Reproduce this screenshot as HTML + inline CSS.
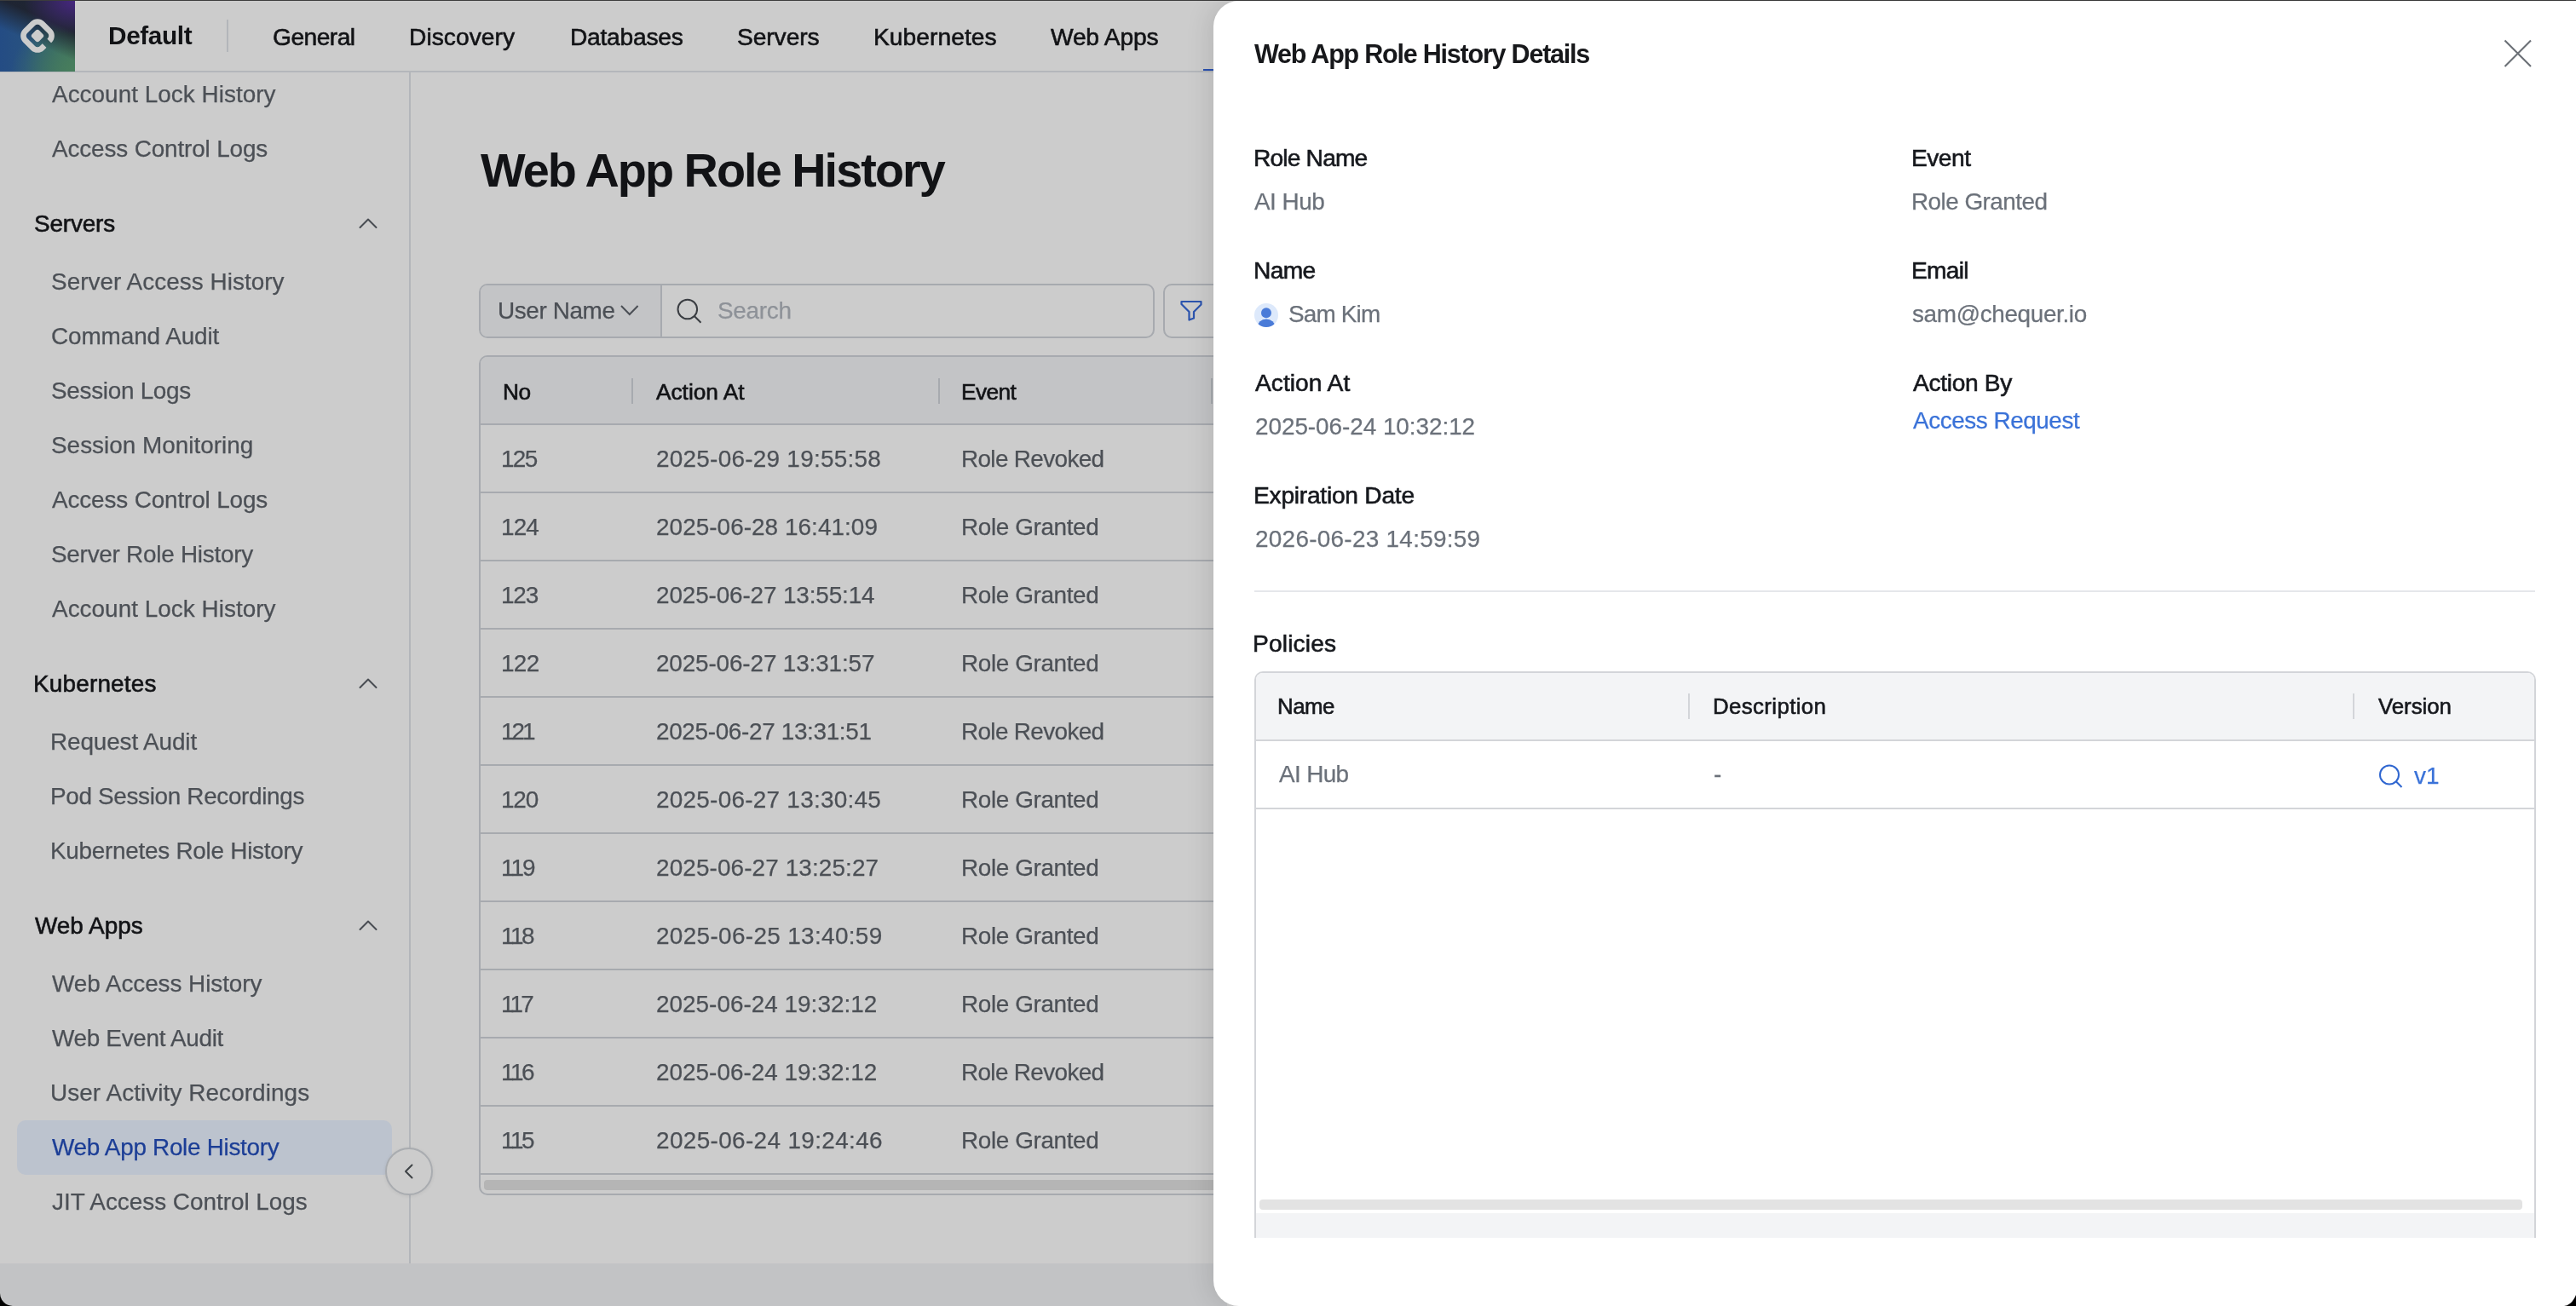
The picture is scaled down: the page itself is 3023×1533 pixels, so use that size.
<!DOCTYPE html>
<html><head><meta charset="utf-8">
<style>
html,body{margin:0;padding:0;}
body{width:3023px;height:1533px;overflow:hidden;position:relative;background:#cccccc;font-family:"Liberation Sans",sans-serif;}
.t{position:absolute;white-space:pre;line-height:1;will-change:transform;}
.a{position:absolute;box-sizing:border-box;}
</style></head><body>
<!-- top dark line -->
<div class="a" style="left:0;top:0;width:3023px;height:1px;background:#3c3c3c;z-index:5"></div>
<!-- logo box -->
<div class="a" style="left:0;top:1px;width:88px;height:83px;overflow:hidden;
 background:
  radial-gradient(ellipse 60px 40px at 100% 0%, rgba(70,38,128,1) 0%, rgba(70,38,128,0.6) 40%, rgba(70,38,128,0) 100%),
  linear-gradient(204deg, rgba(30,34,46,0.9) 0%, rgba(30,34,46,0.95) 30%, rgba(30,34,46,0) 58%),
  radial-gradient(ellipse 75px 60px at 100% 100%, rgba(72,126,92,1) 0%, rgba(72,126,92,0) 100%),
  linear-gradient(90deg,#244c84 0%,#285280 35%,#30606e 65%,#40755f 100%);">
 <svg width="88" height="83" viewBox="0 0 88 83" style="position:absolute;left:0;top:0">
  <defs><mask id="lm"><rect x="0" y="0" width="88" height="83" fill="#fff"/>
   <g transform="translate(44 41) rotate(45)"><rect x="10" y="-5.5" width="12" height="8" fill="#000"/></g></mask></defs>
  <g mask="url(#lm)"><g transform="translate(44 41) rotate(45)">
   <rect x="-13.9" y="-13.9" width="27.8" height="27.8" rx="7.5" fill="none" stroke="#cccccc" stroke-width="6.6"/>
  </g></g>
  <g transform="translate(44 41) rotate(45)"><rect x="-5.9" y="-5.9" width="11.8" height="11.8" rx="3" fill="#cccccc"/></g>
 </svg>
</div>
<!-- header bottom border -->
<div class="a" style="left:88px;top:83px;width:1340px;height:2px;background:#b4b7bb"></div>
<div class="a" style="left:0;top:84px;width:88px;height:1px;background:#b4b7bb"></div>
<!-- active tab indicator -->
<div class="a" style="left:1412px;top:81px;width:20px;height:2px;background:#2a50b0"></div>
<!-- header divider -->
<div class="a" style="left:266px;top:23px;width:2px;height:38px;background:#b3b6ba"></div>
<!-- sidebar border -->
<div class="a" style="left:480px;top:84px;width:2px;height:1399px;background:#b3b6ba"></div>
<!-- selected item -->
<div class="a" style="left:20px;top:1315px;width:440px;height:64px;border-radius:10px;background:#bcc3ce"></div>
<!-- section chevrons -->
<svg class="a" style="left:418px;top:250px" width="28" height="24" viewBox="0 0 28 24"><path d="M4.5 17 L14 7.5 L23.5 17" fill="none" stroke="#484c52" stroke-width="2" stroke-linecap="round" stroke-linejoin="round"/></svg>
<svg class="a" style="left:418px;top:790px" width="28" height="24" viewBox="0 0 28 24"><path d="M4.5 17 L14 7.5 L23.5 17" fill="none" stroke="#484c52" stroke-width="2" stroke-linecap="round" stroke-linejoin="round"/></svg>
<svg class="a" style="left:418px;top:1074px" width="28" height="24" viewBox="0 0 28 24"><path d="M4.5 17 L14 7.5 L23.5 17" fill="none" stroke="#484c52" stroke-width="2" stroke-linecap="round" stroke-linejoin="round"/></svg>
<!-- collapse button -->
<div class="a" style="left:452px;top:1347px;width:56px;height:56px;border-radius:50%;border:2px solid #a9acb0;background:#cccccc;box-shadow:0 1px 4px rgba(0,0,0,0.08)"></div>
<svg class="a" style="left:466px;top:1361px" width="28" height="28" viewBox="0 0 28 28"><path d="M17.5 6.5 L10 14 L17.5 21.5" fill="none" stroke="#3f4347" stroke-width="2" stroke-linecap="round" stroke-linejoin="round"/></svg>
<!-- bottom strip -->
<div class="a" style="left:0;top:1483px;width:1440px;height:50px;background:#c2c3c5"></div>
<!-- bottom-left black corner -->
<svg class="a" style="left:0;top:1518px;z-index:20" width="15" height="15" viewBox="0 0 15 15"><path d="M0 0 A15 15 0 0 0 15 15 L0 15 Z" fill="#000"/></svg>

<!-- search group -->
<div class="a" style="left:562px;top:333px;width:793px;height:64px;border:2px solid #a7aaaf;border-radius:10px;overflow:hidden">
  <div class="a" style="left:0;top:0;width:213px;height:60px;background:#c3c4c6;border-right:2px solid #a7aaaf"></div>
</div>
<svg class="a" style="left:722px;top:350px" width="32" height="28" viewBox="0 0 32 28"><path d="M7 9 L16.8 19 L26.6 9" fill="none" stroke="#4b4f55" stroke-width="2"/></svg>
<svg class="a" style="left:790px;top:347px" width="36" height="36" viewBox="0 0 36 36"><circle cx="16.8" cy="16" r="11.3" fill="none" stroke="#3a3d42" stroke-width="2"/><path d="M24.8 24 L32.5 31.7" stroke="#3a3d42" stroke-width="2"/></svg>
<!-- filter button -->
<div class="a" style="left:1365px;top:333px;width:120px;height:64px;border:2px solid #a7aaaf;border-radius:10px"></div>
<svg class="a" style="left:1382px;top:349px" width="32" height="32" viewBox="0 0 32 32"><path d="M4.5 5 L27.5 5 L27.5 8.5 L19 17 L19 24.5 L13.5 26.5 L13.5 17 L4.5 8 Z" fill="none" stroke="#2c54ae" stroke-width="2.2" stroke-linejoin="round"/></svg>

<!-- main table -->
<div class="a" style="left:562px;top:417px;width:900px;height:986px;border:2px solid #a7aaaf;border-radius:10px;overflow:hidden;background:#cccccc">
  <div class="a" style="left:0;top:0;width:900px;height:79px;background:#c3c4c6"></div>
</div>
<!-- row borders -->
<div id="rowlines"></div>
<div class="a" style="left:564px;top:497px;width:870px;height:2px;background:#a7aaaf"></div>
<div class="a" style="left:564px;top:577px;width:870px;height:2px;background:#a7aaaf"></div>
<div class="a" style="left:564px;top:657px;width:870px;height:2px;background:#a7aaaf"></div>
<div class="a" style="left:564px;top:737px;width:870px;height:2px;background:#a7aaaf"></div>
<div class="a" style="left:564px;top:817px;width:870px;height:2px;background:#a7aaaf"></div>
<div class="a" style="left:564px;top:897px;width:870px;height:2px;background:#a7aaaf"></div>
<div class="a" style="left:564px;top:977px;width:870px;height:2px;background:#a7aaaf"></div>
<div class="a" style="left:564px;top:1057px;width:870px;height:2px;background:#a7aaaf"></div>
<div class="a" style="left:564px;top:1137px;width:870px;height:2px;background:#a7aaaf"></div>
<div class="a" style="left:564px;top:1217px;width:870px;height:2px;background:#a7aaaf"></div>
<div class="a" style="left:564px;top:1297px;width:870px;height:2px;background:#a7aaaf"></div>
<div class="a" style="left:564px;top:1377px;width:870px;height:2px;background:#a7aaaf"></div>
<!-- header dividers -->
<div class="a" style="left:741px;top:444px;width:2px;height:30px;background:#a7aaaf"></div>
<div class="a" style="left:1101px;top:444px;width:2px;height:30px;background:#a7aaaf"></div>
<div class="a" style="left:1421px;top:444px;width:2px;height:30px;background:#a7aaaf"></div>
<!-- main scrollbar -->
<div class="a" style="left:568px;top:1385px;width:880px;height:12px;border-radius:4px;background:#b5b5b5"></div>

<div class=t id=t0 style="left:127.0px;top:27.38px;font-size:29.80px;font-weight:bold;color:#121316;letter-spacing:-0.383px;">Default</div>
<div class=t id=t1 style="left:319.6px;top:28.73px;font-size:28.20px;font-weight:normal;color:#121316;letter-spacing:-0.533px;-webkit-text-stroke:0.6px currentColor;">General</div>
<div class=t id=t2 style="left:480.0px;top:28.73px;font-size:28.20px;font-weight:normal;color:#121316;letter-spacing:0.037px;-webkit-text-stroke:0.6px currentColor;">Discovery</div>
<div class=t id=t3 style="left:668.6px;top:28.73px;font-size:28.20px;font-weight:normal;color:#121316;letter-spacing:-0.250px;-webkit-text-stroke:0.6px currentColor;">Databases</div>
<div class=t id=t4 style="left:864.8px;top:28.73px;font-size:28.20px;font-weight:normal;color:#121316;letter-spacing:-0.083px;-webkit-text-stroke:0.6px currentColor;">Servers</div>
<div class=t id=t5 style="left:1024.8px;top:28.73px;font-size:28.20px;font-weight:normal;color:#121316;letter-spacing:0.044px;-webkit-text-stroke:0.6px currentColor;">Kubernetes</div>
<div class=t id=t6 style="left:1233.0px;top:28.73px;font-size:28.20px;font-weight:normal;color:#121316;letter-spacing:-0.214px;-webkit-text-stroke:0.6px currentColor;">Web Apps</div>
<div class=t id=t7 style="left:61.2px;top:97.18px;font-size:27.91px;font-weight:normal;color:#4c5056;letter-spacing:0.021px;-webkit-text-stroke:0.25px currentColor;">Account Lock History</div>
<div class=t id=t8 style="left:61.2px;top:161.18px;font-size:27.91px;font-weight:normal;color:#4c5056;letter-spacing:-0.150px;-webkit-text-stroke:0.25px currentColor;">Access Control Logs</div>
<div class=t id=t9 style="left:40.0px;top:248.98px;font-size:27.91px;font-weight:normal;color:#121316;letter-spacing:-0.167px;-webkit-text-stroke:0.6px currentColor;">Servers</div>
<div class=t id=t10 style="left:60.2px;top:316.98px;font-size:27.91px;font-weight:normal;color:#4c5056;letter-spacing:0.030px;-webkit-text-stroke:0.25px currentColor;">Server Access History</div>
<div class=t id=t11 style="left:60.2px;top:380.98px;font-size:27.91px;font-weight:normal;color:#4c5056;letter-spacing:-0.100px;-webkit-text-stroke:0.25px currentColor;">Command Audit</div>
<div class=t id=t12 style="left:60.2px;top:444.98px;font-size:27.91px;font-weight:normal;color:#4c5056;letter-spacing:-0.300px;-webkit-text-stroke:0.25px currentColor;">Session Logs</div>
<div class=t id=t13 style="left:60.2px;top:508.98px;font-size:27.91px;font-weight:normal;color:#4c5056;letter-spacing:0.000px;-webkit-text-stroke:0.25px currentColor;">Session Monitoring</div>
<div class=t id=t14 style="left:61.2px;top:572.98px;font-size:27.91px;font-weight:normal;color:#4c5056;letter-spacing:-0.150px;-webkit-text-stroke:0.25px currentColor;">Access Control Logs</div>
<div class=t id=t15 style="left:60.2px;top:636.98px;font-size:27.91px;font-weight:normal;color:#4c5056;letter-spacing:-0.267px;-webkit-text-stroke:0.25px currentColor;">Server Role History</div>
<div class=t id=t16 style="left:61.2px;top:700.98px;font-size:27.91px;font-weight:normal;color:#4c5056;letter-spacing:0.021px;-webkit-text-stroke:0.25px currentColor;">Account Lock History</div>
<div class=t id=t17 style="left:39.0px;top:788.98px;font-size:27.91px;font-weight:normal;color:#121316;letter-spacing:0.189px;-webkit-text-stroke:0.6px currentColor;">Kubernetes</div>
<div class=t id=t18 style="left:59.2px;top:856.98px;font-size:27.91px;font-weight:normal;color:#4c5056;letter-spacing:-0.133px;-webkit-text-stroke:0.25px currentColor;">Request Audit</div>
<div class=t id=t19 style="left:59.2px;top:920.98px;font-size:27.91px;font-weight:normal;color:#4c5056;letter-spacing:-0.343px;-webkit-text-stroke:0.25px currentColor;">Pod Session Recordings</div>
<div class=t id=t20 style="left:59.2px;top:984.98px;font-size:27.91px;font-weight:normal;color:#4c5056;letter-spacing:-0.273px;-webkit-text-stroke:0.25px currentColor;">Kubernetes Role History</div>
<div class=t id=t21 style="left:41.0px;top:1072.98px;font-size:27.91px;font-weight:normal;color:#121316;letter-spacing:0.000px;-webkit-text-stroke:0.6px currentColor;">Web Apps</div>
<div class=t id=t22 style="left:61.2px;top:1140.98px;font-size:27.91px;font-weight:normal;color:#4c5056;letter-spacing:-0.065px;-webkit-text-stroke:0.25px currentColor;">Web Access History</div>
<div class=t id=t23 style="left:61.2px;top:1204.98px;font-size:27.91px;font-weight:normal;color:#4c5056;letter-spacing:-0.321px;-webkit-text-stroke:0.25px currentColor;">Web Event Audit</div>
<div class=t id=t24 style="left:59.2px;top:1268.98px;font-size:27.91px;font-weight:normal;color:#4c5056;letter-spacing:0.074px;-webkit-text-stroke:0.25px currentColor;">User Activity Recordings</div>
<div class=t id=t25 style="left:61.2px;top:1332.98px;font-size:27.91px;font-weight:normal;color:#1c3e96;letter-spacing:-0.305px;-webkit-text-stroke:0.25px currentColor;">Web App Role History</div>
<div class=t id=t26 style="left:61.2px;top:1396.98px;font-size:27.91px;font-weight:normal;color:#4c5056;letter-spacing:-0.032px;-webkit-text-stroke:0.25px currentColor;">JIT Access Control Logs</div>
<div class=t id=t27 style="left:563.6px;top:172.05px;font-size:55.81px;font-weight:bold;color:#121316;letter-spacing:-1.947px;">Web App Role History</div>
<div class=t id=t28 style="left:583.8px;top:350.98px;font-size:27.91px;font-weight:normal;color:#4b4f55;letter-spacing:-0.400px;-webkit-text-stroke:0.25px currentColor;">User Name</div>
<div class=t id=t29 style="left:842.0px;top:350.98px;font-size:27.91px;font-weight:normal;color:#8e9298;letter-spacing:-0.280px;-webkit-text-stroke:0.25px currentColor;">Search</div>
<div class=t id=t30 style="left:589.8px;top:446.63px;font-size:26.31px;font-weight:normal;color:#121316;letter-spacing:-0.400px;-webkit-text-stroke:0.6px currentColor;">No</div>
<div class=t id=t31 style="left:770.4px;top:446.63px;font-size:26.31px;font-weight:normal;color:#121316;letter-spacing:-0.037px;-webkit-text-stroke:0.6px currentColor;">Action At</div>
<div class=t id=t32 style="left:1128.0px;top:446.63px;font-size:26.31px;font-weight:normal;color:#121316;letter-spacing:-0.600px;-webkit-text-stroke:0.6px currentColor;">Event</div>
<div class=t id=t33 style="left:588.2px;top:525.28px;font-size:27.91px;font-weight:normal;color:#4c5056;letter-spacing:-1.700px;-webkit-text-stroke:0.25px currentColor;">125</div>
<div class=t id=t34 style="left:770.4px;top:525.28px;font-size:27.91px;font-weight:normal;color:#4c5056;letter-spacing:0.261px;-webkit-text-stroke:0.25px currentColor;">2025-06-29 19:55:58</div>
<div class=t id=t35 style="left:1128.2px;top:525.28px;font-size:27.91px;font-weight:normal;color:#4c5056;letter-spacing:-0.655px;-webkit-text-stroke:0.25px currentColor;">Role Revoked</div>
<div class=t id=t36 style="left:588.2px;top:605.28px;font-size:27.91px;font-weight:normal;color:#4c5056;letter-spacing:-0.850px;-webkit-text-stroke:0.25px currentColor;">124</div>
<div class=t id=t37 style="left:770.4px;top:605.28px;font-size:27.91px;font-weight:normal;color:#4c5056;letter-spacing:0.044px;-webkit-text-stroke:0.25px currentColor;">2025-06-28 16:41:09</div>
<div class=t id=t38 style="left:1128.2px;top:605.28px;font-size:27.91px;font-weight:normal;color:#4c5056;letter-spacing:-0.382px;-webkit-text-stroke:0.25px currentColor;">Role Granted</div>
<div class=t id=t39 style="left:588.2px;top:685.28px;font-size:27.91px;font-weight:normal;color:#4c5056;letter-spacing:-1.200px;-webkit-text-stroke:0.25px currentColor;">123</div>
<div class=t id=t40 style="left:770.4px;top:685.28px;font-size:27.91px;font-weight:normal;color:#4c5056;letter-spacing:-0.144px;-webkit-text-stroke:0.25px currentColor;">2025-06-27 13:55:14</div>
<div class=t id=t41 style="left:1128.2px;top:685.28px;font-size:27.91px;font-weight:normal;color:#4c5056;letter-spacing:-0.382px;-webkit-text-stroke:0.25px currentColor;">Role Granted</div>
<div class=t id=t42 style="left:588.2px;top:765.28px;font-size:27.91px;font-weight:normal;color:#4c5056;letter-spacing:-0.700px;-webkit-text-stroke:0.25px currentColor;">122</div>
<div class=t id=t43 style="left:770.4px;top:765.28px;font-size:27.91px;font-weight:normal;color:#4c5056;letter-spacing:-0.150px;-webkit-text-stroke:0.25px currentColor;">2025-06-27 13:31:57</div>
<div class=t id=t44 style="left:1128.2px;top:765.28px;font-size:27.91px;font-weight:normal;color:#4c5056;letter-spacing:-0.382px;-webkit-text-stroke:0.25px currentColor;">Role Granted</div>
<div class=t id=t45 style="left:588.2px;top:845.28px;font-size:27.91px;font-weight:normal;color:#4c5056;letter-spacing:-3.000px;-webkit-text-stroke:0.25px currentColor;">121</div>
<div class=t id=t46 style="left:770.4px;top:845.28px;font-size:27.91px;font-weight:normal;color:#4c5056;letter-spacing:-0.344px;-webkit-text-stroke:0.25px currentColor;">2025-06-27 13:31:51</div>
<div class=t id=t47 style="left:1128.2px;top:845.28px;font-size:27.91px;font-weight:normal;color:#4c5056;letter-spacing:-0.655px;-webkit-text-stroke:0.25px currentColor;">Role Revoked</div>
<div class=t id=t48 style="left:588.2px;top:925.28px;font-size:27.91px;font-weight:normal;color:#4c5056;letter-spacing:-1.200px;-webkit-text-stroke:0.25px currentColor;">120</div>
<div class=t id=t49 style="left:770.4px;top:925.28px;font-size:27.91px;font-weight:normal;color:#4c5056;letter-spacing:0.261px;-webkit-text-stroke:0.25px currentColor;">2025-06-27 13:30:45</div>
<div class=t id=t50 style="left:1128.2px;top:925.28px;font-size:27.91px;font-weight:normal;color:#4c5056;letter-spacing:-0.382px;-webkit-text-stroke:0.25px currentColor;">Role Granted</div>
<div class=t id=t51 style="left:588.2px;top:1005.28px;font-size:27.91px;font-weight:normal;color:#4c5056;letter-spacing:-2.000px;-webkit-text-stroke:0.25px currentColor;">119</div>
<div class=t id=t52 style="left:770.4px;top:1005.28px;font-size:27.91px;font-weight:normal;color:#4c5056;letter-spacing:0.106px;-webkit-text-stroke:0.25px currentColor;">2025-06-27 13:25:27</div>
<div class=t id=t53 style="left:1128.2px;top:1005.28px;font-size:27.91px;font-weight:normal;color:#4c5056;letter-spacing:-0.382px;-webkit-text-stroke:0.25px currentColor;">Role Granted</div>
<div class=t id=t54 style="left:588.2px;top:1085.28px;font-size:27.91px;font-weight:normal;color:#4c5056;letter-spacing:-2.500px;-webkit-text-stroke:0.25px currentColor;">118</div>
<div class=t id=t55 style="left:770.4px;top:1085.28px;font-size:27.91px;font-weight:normal;color:#4c5056;letter-spacing:0.339px;-webkit-text-stroke:0.25px currentColor;">2025-06-25 13:40:59</div>
<div class=t id=t56 style="left:1128.2px;top:1085.28px;font-size:27.91px;font-weight:normal;color:#4c5056;letter-spacing:-0.382px;-webkit-text-stroke:0.25px currentColor;">Role Granted</div>
<div class=t id=t57 style="left:588.2px;top:1165.28px;font-size:27.91px;font-weight:normal;color:#4c5056;letter-spacing:-2.900px;-webkit-text-stroke:0.25px currentColor;">117</div>
<div class=t id=t58 style="left:770.4px;top:1165.28px;font-size:27.91px;font-weight:normal;color:#4c5056;letter-spacing:0.006px;-webkit-text-stroke:0.25px currentColor;">2025-06-24 19:32:12</div>
<div class=t id=t59 style="left:1128.2px;top:1165.28px;font-size:27.91px;font-weight:normal;color:#4c5056;letter-spacing:-0.382px;-webkit-text-stroke:0.25px currentColor;">Role Granted</div>
<div class=t id=t60 style="left:588.2px;top:1245.28px;font-size:27.91px;font-weight:normal;color:#4c5056;letter-spacing:-2.500px;-webkit-text-stroke:0.25px currentColor;">116</div>
<div class=t id=t61 style="left:770.4px;top:1245.28px;font-size:27.91px;font-weight:normal;color:#4c5056;letter-spacing:0.006px;-webkit-text-stroke:0.25px currentColor;">2025-06-24 19:32:12</div>
<div class=t id=t62 style="left:1128.2px;top:1245.28px;font-size:27.91px;font-weight:normal;color:#4c5056;letter-spacing:-0.655px;-webkit-text-stroke:0.25px currentColor;">Role Revoked</div>
<div class=t id=t63 style="left:588.2px;top:1325.28px;font-size:27.91px;font-weight:normal;color:#4c5056;letter-spacing:-2.500px;-webkit-text-stroke:0.25px currentColor;">115</div>
<div class=t id=t64 style="left:770.4px;top:1325.28px;font-size:27.91px;font-weight:normal;color:#4c5056;letter-spacing:0.361px;-webkit-text-stroke:0.25px currentColor;">2025-06-24 19:24:46</div>
<div class=t id=t65 style="left:1128.2px;top:1325.28px;font-size:27.91px;font-weight:normal;color:#4c5056;letter-spacing:-0.382px;-webkit-text-stroke:0.25px currentColor;">Role Granted</div>
<div class=t id=t66 style="left:1472.2px;top:48.06px;font-size:30.52px;font-weight:bold;color:#17181b;letter-spacing:-1.222px;z-index:12;">Web App Role History Details</div>
<div class=t id=t67 style="left:1471.4px;top:170.93px;font-size:28.20px;font-weight:normal;color:#16181d;letter-spacing:-0.837px;-webkit-text-stroke:0.6px currentColor;z-index:12;">Role Name</div>
<div class=t id=t68 style="left:2243.4px;top:170.93px;font-size:28.20px;font-weight:normal;color:#16181d;letter-spacing:-0.525px;-webkit-text-stroke:0.6px currentColor;z-index:12;">Event</div>
<div class=t id=t69 style="left:1472.2px;top:223.08px;font-size:27.91px;font-weight:normal;color:#6b717a;letter-spacing:-0.500px;-webkit-text-stroke:0.25px currentColor;z-index:12;">AI Hub</div>
<div class=t id=t70 style="left:2243.4px;top:223.08px;font-size:27.91px;font-weight:normal;color:#6b717a;letter-spacing:-0.545px;-webkit-text-stroke:0.25px currentColor;z-index:12;">Role Granted</div>
<div class=t id=t71 style="left:1471.4px;top:303.03px;font-size:28.20px;font-weight:normal;color:#16181d;letter-spacing:-0.633px;-webkit-text-stroke:0.6px currentColor;z-index:12;">Name</div>
<div class=t id=t72 style="left:2243.0px;top:302.93px;font-size:28.20px;font-weight:normal;color:#16181d;letter-spacing:-0.725px;-webkit-text-stroke:0.6px currentColor;z-index:12;">Email</div>
<div class=t id=t73 style="left:1512.0px;top:355.28px;font-size:27.91px;font-weight:normal;color:#6b717a;letter-spacing:-0.833px;-webkit-text-stroke:0.25px currentColor;z-index:12;">Sam Kim</div>
<div class=t id=t74 style="left:2244.0px;top:354.78px;font-size:27.91px;font-weight:normal;color:#6b717a;letter-spacing:-0.354px;-webkit-text-stroke:0.25px currentColor;z-index:12;">sam@chequer.io</div>
<div class=t id=t75 style="left:1472.8px;top:434.93px;font-size:28.20px;font-weight:normal;color:#16181d;letter-spacing:0.000px;-webkit-text-stroke:0.6px currentColor;z-index:12;">Action At</div>
<div class=t id=t76 style="left:2245.0px;top:434.93px;font-size:28.20px;font-weight:normal;color:#16181d;letter-spacing:-0.338px;-webkit-text-stroke:0.6px currentColor;z-index:12;">Action By</div>
<div class=t id=t77 style="left:1472.6px;top:487.48px;font-size:27.91px;font-weight:normal;color:#6b717a;letter-spacing:-0.056px;-webkit-text-stroke:0.25px currentColor;z-index:12;">2025-06-24 10:32:12</div>
<div class=t id=t78 style="left:2245.0px;top:479.78px;font-size:27.91px;font-weight:normal;color:#3a72d8;letter-spacing:-0.462px;-webkit-text-stroke:0.25px currentColor;z-index:12;">Access Request</div>
<div class=t id=t79 style="left:1470.8px;top:566.93px;font-size:28.20px;font-weight:normal;color:#16181d;letter-spacing:-0.257px;-webkit-text-stroke:0.6px currentColor;z-index:12;">Expiration Date</div>
<div class=t id=t80 style="left:1472.6px;top:618.98px;font-size:27.91px;font-weight:normal;color:#6b717a;letter-spacing:0.278px;-webkit-text-stroke:0.25px currentColor;z-index:12;">2026-06-23 14:59:59</div>
<div class=t id=t81 style="left:1470.0px;top:740.93px;font-size:28.20px;font-weight:normal;color:#16181d;letter-spacing:0.143px;-webkit-text-stroke:0.6px currentColor;z-index:12;">Policies</div>
<div class=t id=t82 style="left:1499.2px;top:816.50px;font-size:25.87px;font-weight:normal;color:#16181d;letter-spacing:-0.500px;-webkit-text-stroke:0.6px currentColor;z-index:12;">Name</div>
<div class=t id=t83 style="left:2009.6px;top:816.50px;font-size:25.87px;font-weight:normal;color:#16181d;letter-spacing:0.360px;-webkit-text-stroke:0.6px currentColor;z-index:12;">Description</div>
<div class=t id=t84 style="left:2791.0px;top:816.50px;font-size:25.87px;font-weight:normal;color:#16181d;letter-spacing:-0.050px;-webkit-text-stroke:0.6px currentColor;z-index:12;">Version</div>
<div class=t id=t85 style="left:1501.4px;top:894.98px;font-size:27.91px;font-weight:normal;color:#6b717a;letter-spacing:-0.660px;-webkit-text-stroke:0.25px currentColor;z-index:12;">AI Hub</div>
<div class=t id=t86 style="left:2010.6px;top:894.98px;font-size:27.91px;font-weight:normal;color:#6b717a;letter-spacing:0.000px;-webkit-text-stroke:0.25px currentColor;z-index:12;">-</div>
<div class=t id=t87 style="left:2833.0px;top:896.98px;font-size:27.91px;font-weight:normal;color:#3a72d8;letter-spacing:0.000px;-webkit-text-stroke:0.25px currentColor;z-index:12;">v1</div>

<!-- drawer shadow -->
<div class="a" style="left:1424px;top:1px;width:1599px;height:1532px;border-radius:30px 0 0 30px;box-shadow:-6px 0 28px rgba(0,0,0,0.10);background:#fff;z-index:10"></div>
<div class="a" style="left:1424px;top:1px;width:1599px;height:1532px;z-index:11" id="drawer">
  <!-- close X -->
  <svg class="a" style="left:1512px;top:43px" width="40" height="40" viewBox="0 0 40 40"><path d="M3.5 3.5 L34 34 M34 3.5 L3.5 34" stroke="#6b7076" stroke-width="2.1"/></svg>
  <!-- divider -->
  <div class="a" style="left:48px;top:692px;width:1503px;height:2px;background:#e5e7eb"></div>
  <!-- avatar -->
  <svg class="a" style="left:48px;top:355px" width="28" height="28" viewBox="0 0 28 28">
    <defs><clipPath id="avc"><circle cx="14" cy="14" r="14"/></clipPath></defs>
    <circle cx="14" cy="14" r="14" fill="#dde9fb"/>
    <circle cx="14" cy="11.3" r="6" fill="#4a7bd8"/>
    <ellipse cx="14" cy="28" rx="10.5" ry="9.4" fill="#4a7bd8" clip-path="url(#avc)"/>
  </svg>
  <!-- policy table -->
  <div class="a" style="left:48px;top:787px;width:1504px;height:665px;border:2px solid #d3d5d9;border-bottom:none;border-radius:10px 10px 0 0;overflow:hidden">
    <div class="a" style="left:0;top:0;width:1501px;height:78px;background:#f3f4f6"></div>
    <div class="a" style="left:0;top:78px;width:1501px;height:2px;background:#d3d5d9"></div>
    <div class="a" style="left:0;top:158px;width:1501px;height:2px;background:#d3d5d9"></div>
    <div class="a" style="left:4px;top:618px;width:1482px;height:12px;border-radius:4px;background:#e3e3e3"></div>
    <div class="a" style="left:0;top:634px;width:1501px;height:40px;background:#f3f4f6"></div>
  </div>
  <div class="a" style="left:557px;top:813px;width:2px;height:30px;background:#d3d5d9"></div>
  <div class="a" style="left:1337px;top:813px;width:2px;height:30px;background:#d3d5d9"></div>
  <!-- search icon in version -->
  <svg class="a" style="left:1364px;top:893px" width="36" height="36" viewBox="0 0 36 36"><circle cx="16" cy="15.5" r="11" fill="none" stroke="#2f66d0" stroke-width="2"/><path d="M23.8 23.3 L30.5 30" stroke="#2f66d0" stroke-width="2"/></svg>
</div>
<!--DRAWERTEXTS-->
<!-- bottom-right black corner -->
<svg class="a" style="left:3009px;top:1520px;z-index:20" width="14" height="13" viewBox="0 0 14 13"><path d="M14 0 Q9 12 0 13 L14 13 Z" fill="#000"/></svg>
</body></html>
